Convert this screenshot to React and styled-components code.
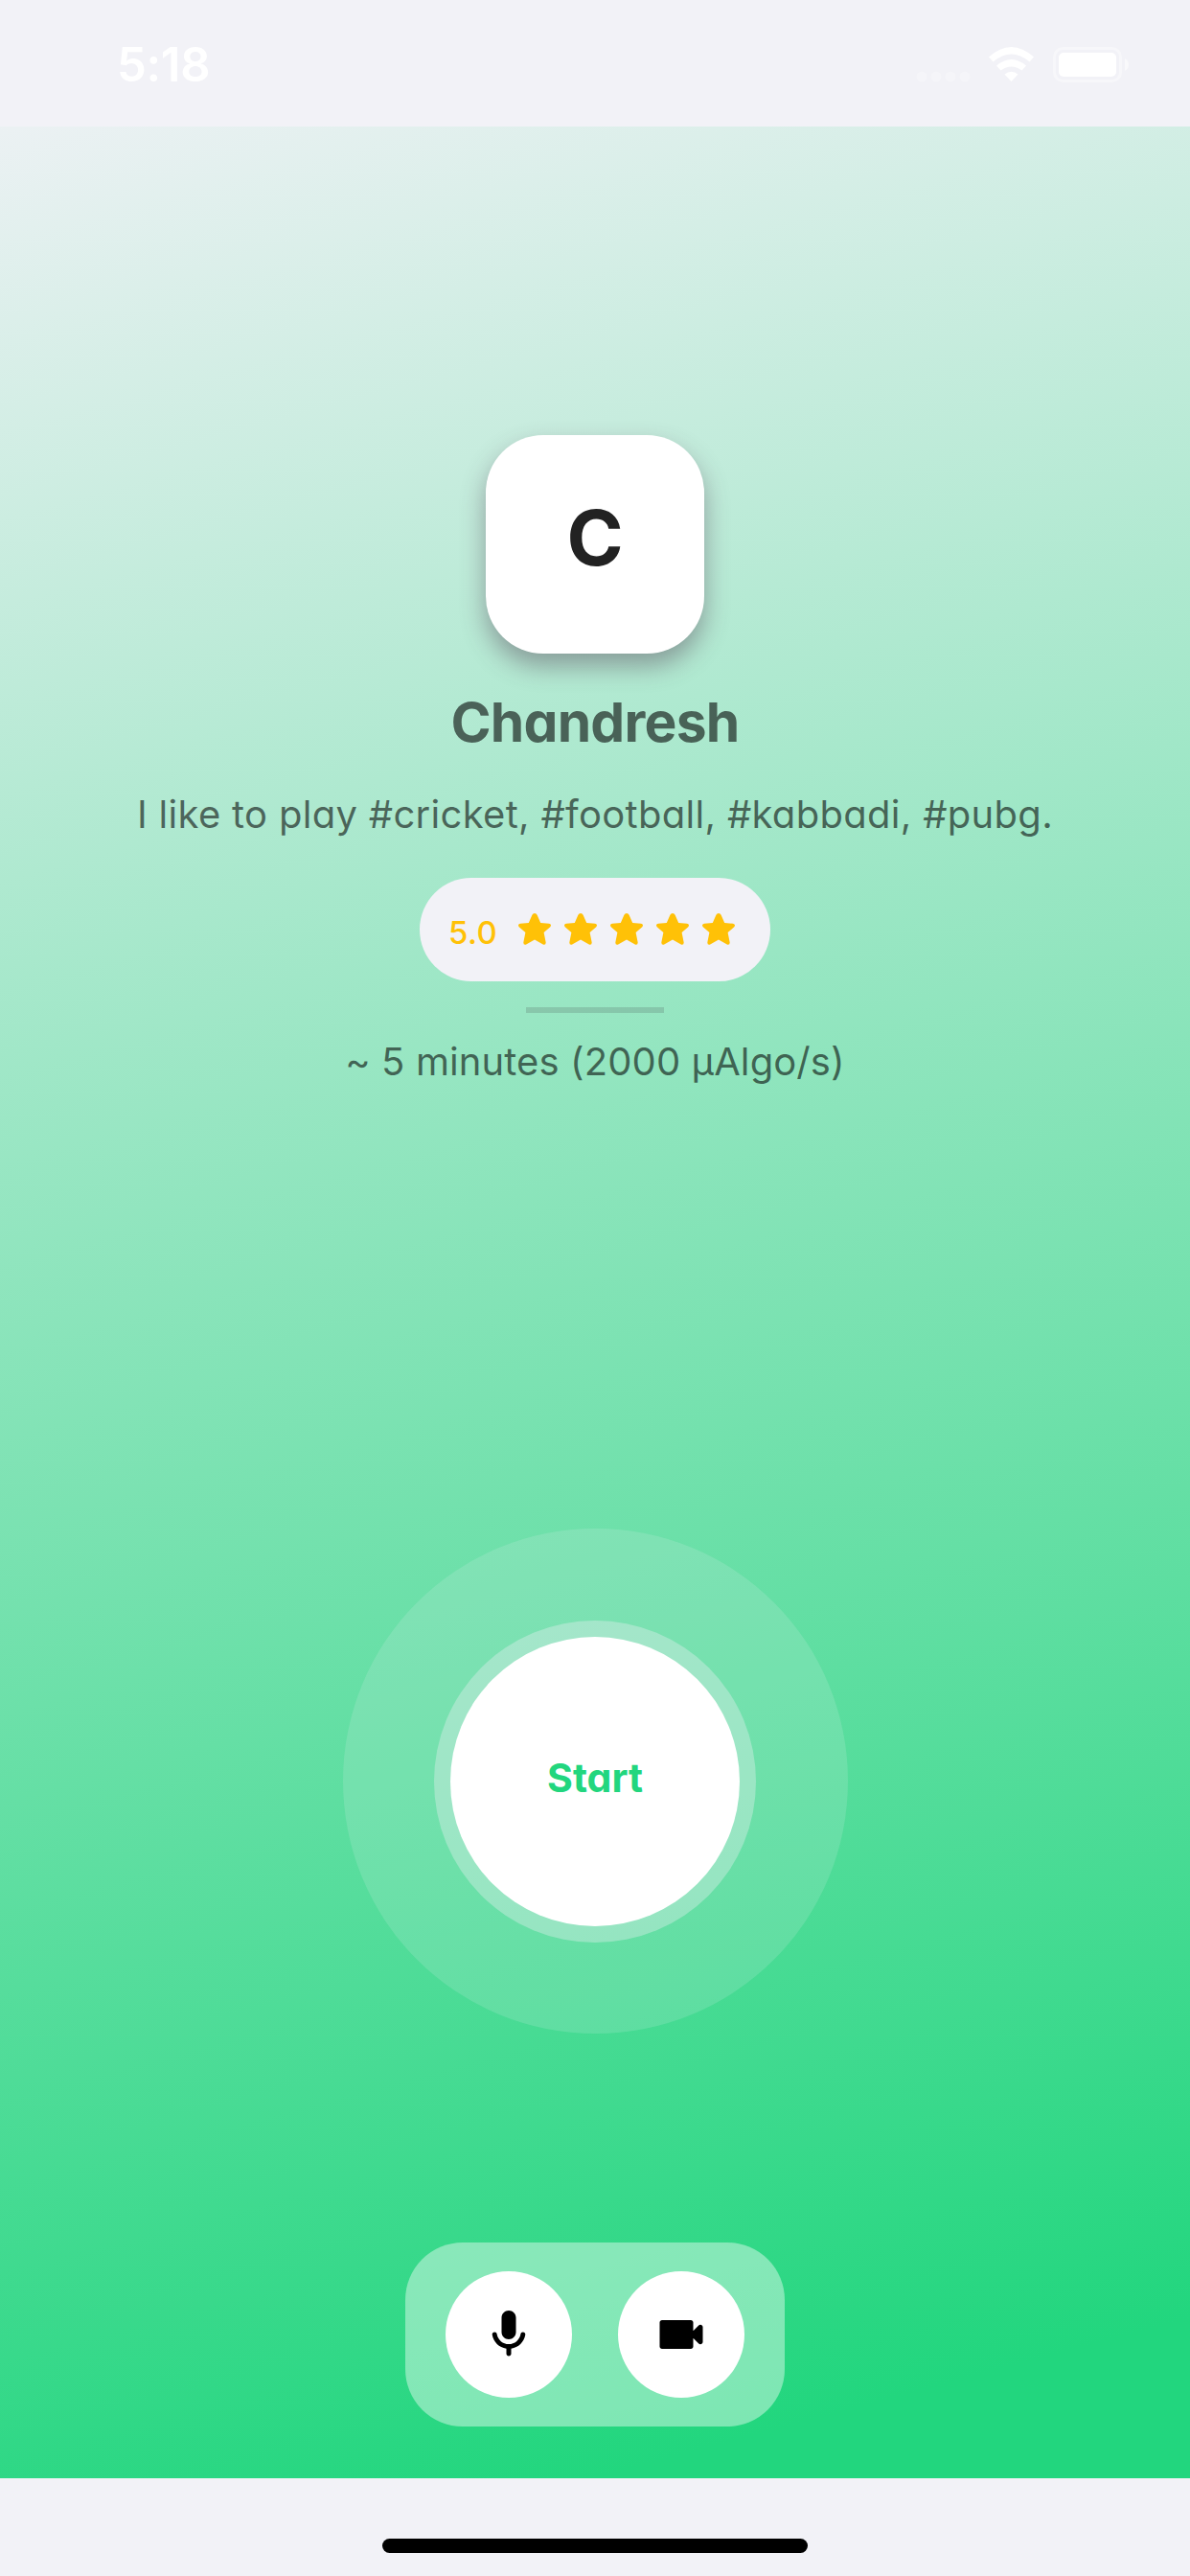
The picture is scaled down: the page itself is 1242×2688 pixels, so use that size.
import React from 'react';
import styled, { createGlobalStyle } from 'styled-components';

const GlobalStyle = createGlobalStyle`
  * { box-sizing: border-box; }
  body { margin: 0; background: #f2f2f7; }
`;

const Screen = styled.main`
  width: 1242px;
  height: 2688px;
  display: flex;
  flex-direction: column;
  background: #f2f2f7;
  overflow: hidden;
  font-family: Inter, 'Liberation Sans', sans-serif;
  font-feature-settings: 'cv11';
  white-space: nowrap;
`;

const StatusBar = styled.header`
  height: 132px;
  padding: 0 64px 0 122px;
  display: flex;
  justify-content: space-between;
  color: #fff;
`;

const Time = styled.span`
  font-size: 49px;
  line-height: 58px;
  margin-top: 39px;
  font-weight: 600;
  letter-spacing: -0.3px;
`;

const StatusIcons = styled.svg`
  display: block;
  width: 222px;
  height: 37px;
  margin-top: 49px;
`;

const Body = styled.section`
  height: 2454px;
  display: flex;
  flex-direction: column;
  align-items: center;
  background: linear-gradient(165deg, #f2f2f7 -3%, #22d67e 94%);
`;

const Avatar = styled.div`
  margin-top: 322px;
  width: 228px;
  height: 228px;
  padding-bottom: 16px;
  display: flex;
  align-items: center;
  justify-content: center;
  border-radius: 60px;
  background: #fff;
  color: #222;
  font-size: 80px;
  font-weight: 700;
  box-shadow: 0 13px 26px rgba(80, 60, 80, 0.44);
`;

const Line = styled.p`
  margin: ${(p) => p.$top}px 0 0;
  height: ${(p) => p.$height}px;
  line-height: ${(p) => p.$height}px;
  font-size: ${(p) => p.$size}px;
  font-weight: ${(p) => p.$weight || 400};
  letter-spacing: ${(p) => p.$spacing || 0}px;
  color: rgba(0, 0, 0, 0.58);
`;

const Rating = styled.div`
  margin-top: 41px;
  width: 366px;
  height: 108px;
  padding: 0 34px 0 30px;
  display: flex;
  align-items: center;
  justify-content: space-between;
  border-radius: 54px;
  background: #f2f2f7;
  color: #ffc107;
`;

const Score = styled.span`
  padding-top: 6px;
  font-size: 33px;
  font-weight: 500;
  letter-spacing: 0.4px;
`;

const Stars = styled.div`
  display: flex;
  gap: 8px;
`;

const StarSvg = styled.svg`
  display: block;
  width: 40px;
  height: 40px;
`;

const Divider = styled.hr`
  margin: 27px 0 0;
  width: 144px;
  height: 6px;
  border: 0;
  background: rgba(60, 60, 67, 0.18);
`;

const Halo = styled.div`
  margin-top: 462px;
  width: 527px;
  height: 527px;
  flex: none;
  display: grid;
  place-items: center;
  border-radius: 50%;
  background: rgba(242, 242, 247, 0.15);
`;

const Ring = styled.div`
  width: 336px;
  height: 336px;
  display: grid;
  place-items: center;
  border-radius: 50%;
  background: rgba(242, 242, 247, 0.35);
`;

const StartButton = styled.button`
  width: 302px;
  height: 302px;
  padding: 0 0 8px;
  border: 0;
  border-radius: 50%;
  background: #fff;
  color: #22d67e;
  font: inherit;
  font-feature-settings: inherit;
  font-size: 41px;
  font-weight: 700;
`;

const Controls = styled.div`
  margin-top: 218px;
  width: 396px;
  height: 192px;
  display: flex;
  align-items: center;
  justify-content: center;
  gap: 48px;
  border-radius: 60px;
  background: rgba(255, 255, 255, 0.41);
`;

const RoundButton = styled.button`
  width: 132px;
  height: 132px;
  padding: 0;
  display: grid;
  place-items: center;
  border: 0;
  border-radius: 50%;
  background: #fff;
  color: #000;
`;

const Glyph = styled.svg`
  display: block;
  width: 60px;
  height: 60px;
`;

const HomeArea = styled.footer`
  height: 102px;
  padding-top: 63px;
  display: flex;
  justify-content: center;
`;

const HomeIndicator = styled.div`
  width: 444px;
  height: 15px;
  border-radius: 8px;
  background: #000;
`;

const Star = () => (
  <StarSvg viewBox="0 0 40 40" fill="currentColor">
    <path d="M20 3Q21.800 3 22.600 4.800L26.200 13L35 13.800Q38.200 14.600 36.300 17.200L29.600 23L31.700 33.500Q31.600 36.600 28.800 35.600L20 30.600L11.200 35.600Q8.400 36.600 8.300 33.500L10.400 23L3.700 17.200Q1.800 14.600 5 13.800L13.800 13L17.400 4.800Q18.200 3 20 3Z" />
  </StarSvg>
);

const MicIcon = () => (
  <Glyph viewBox="0 0 24 24" fill="currentColor">
    <path d="M12 14c1.660 0 3-1.340 3-3V5c0-1.660-1.340-3-3-3S9 3.340 9 5v6c0 1.660 1.340 3 3 3zm5.910-3c-.49 0-.9.360-.98.850C16.520 14.200 14.470 16 12 16s-4.520-1.800-4.930-4.150c-.08-.49-.49-.85-.98-.85-.61 0-1.090.540-1 1.140.490 3 2.890 5.350 5.910 5.780V20c0 .55.450 1 1 1s1-.45 1-1v-2.080c3.020-.43 5.420-2.780 5.910-5.780.1-.6-.39-1.140-1-1.140z" />
  </Glyph>
);

const VideoIcon = () => (
  <Glyph viewBox="0 0 24 24" fill="currentColor">
    <path d="M17 10.500V7c0-.55-.45-1-1-1H4c-.55 0-1 .45-1 1v10c0 .55.450 1 1 1h12c.55 0 1-.45 1-1v-3.500l2.290 2.290c.63.630 1.710.180 1.710-.71V8.910c0-.89-1.080-1.340-1.710-.71L17 10.500z" />
  </Glyph>
);

export default function App() {
  return (
    <Screen>
      <GlobalStyle />
      <StatusBar>
        <Time>5:18</Time>
        <StatusIcons viewBox="0 0 222 37" fill="#fff">
          <g opacity="0.25">
            <circle cx="6" cy="31" r="5.500" />
            <circle cx="21" cy="31" r="5.500" />
            <circle cx="36" cy="31" r="5.500" />
            <circle cx="51" cy="31" r="5.500" />
          </g>
          <path d="M76 10.500Q99.500-10.500 123 10.500L118.500 15.500Q99.500-0.500 80.500 15.500Z" />
          <path d="M84 19.500Q99.500 6.500 115 19.500L110.500 24.500Q99.500 16.500 88.500 24.500Z" />
          <path d="M92.500 28.500Q99.500 23 106.500 28.500L99.500 36Z" />
          <rect x="144.500" y="1.500" width="69" height="34" rx="9" fill="none" stroke="#fff" strokeWidth="3" opacity="0.4" />
          <rect x="149" y="6" width="60" height="25" rx="5" />
          <path d="M218 12Q222 14 222 18.500T218 25Z" opacity="0.5" />
        </StatusIcons>
      </StatusBar>
      <Body>
        <Avatar>C</Avatar>
        <Line $top={37} $height={70} $size={57} $weight={700} $spacing={-0.8}>Chandresh</Line>
        <Line $top={36} $height={50} $size={40} $spacing={0.3}>I like to play #cricket, #football, #kabbadi, #pubg.</Line>
        <Rating>
          <Score>5.0</Score>
          <Stars>
            {[1, 2, 3, 4, 5].map((n) => <Star key={n} />)}
          </Stars>
        </Rating>
        <Divider />
        <Line $top={26} $height={50} $size={40} $spacing={0.1}>~ 5 minutes (2000 µAlgo/s)</Line>
        <Halo>
          <Ring>
            <StartButton>Start</StartButton>
          </Ring>
        </Halo>
        <Controls>
          <RoundButton aria-label="Microphone"><MicIcon /></RoundButton>
          <RoundButton aria-label="Camera"><VideoIcon /></RoundButton>
        </Controls>
      </Body>
      <HomeArea>
        <HomeIndicator />
      </HomeArea>
    </Screen>
  );
}
